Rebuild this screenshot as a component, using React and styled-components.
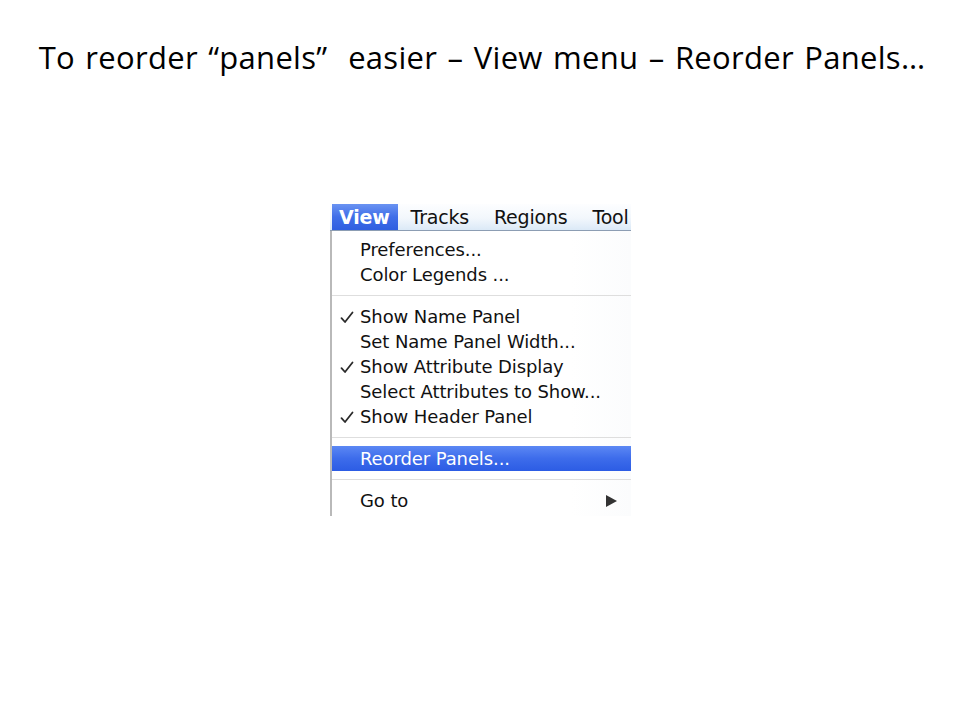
import styled, { createGlobalStyle } from 'styled-components';

const GlobalStyle = createGlobalStyle`
  html, body {
    margin: 0;
    padding: 0;
    background: #fff;
  }
`;

const menuBarItems = ['View', 'Tracks', 'Regions', 'Tool'];

const groups = [
  [
    { label: 'Preferences...' },
    { label: 'Color Legends ...' },
  ],
  [
    { label: 'Show Name Panel', checked: true },
    { label: 'Set Name Panel Width...' },
    { label: 'Show Attribute Display', checked: true },
    { label: 'Select Attributes to Show...' },
    { label: 'Show Header Panel', checked: true },
  ],
  [{ label: 'Reorder Panels...', active: true }],
  [{ label: 'Go to', submenu: true }],
];

const App = () => {
  return (
    <Page>
      <GlobalStyle />
      <Title>To reorder “panels”  easier – View menu – Reorder Panels…</Title>
      <Shot>
        <MenuBar>
          {menuBarItems.map((item, i) => (
            <BarItem key={item} $open={i === 0}>
              {item}
            </BarItem>
          ))}
        </MenuBar>
        <Dropdown>
          {groups.map((group, gi) => (
            <Group key={gi}>
              {gi > 0 && <Separator />}
              {group.map((item) => (
                <MenuItem key={item.label} $active={item.active}>
                  <Check>
                    {item.checked && (
                      <svg width="14" height="13" viewBox="0 0 14 13">
                        <path
                          d="M1.5 7.2 L5 11 L12.5 1.5"
                          fill="none"
                          stroke="#2a2a2a"
                          strokeWidth="1.8"
                          strokeLinecap="round"
                          strokeLinejoin="round"
                        />
                      </svg>
                    )}
                  </Check>
                  <Label>{item.label}</Label>
                  {item.submenu && (
                    <Arrow width="11" height="12" viewBox="0 0 11 12">
                      <polygon points="0,0 11,6 0,12" fill="#333" />
                    </Arrow>
                  )}
                </MenuItem>
              ))}
            </Group>
          ))}
        </Dropdown>
      </Shot>
    </Page>
  );
};

const Page = styled.div`
  width: 960px;
  height: 720px;
  padding-top: 37px;
  box-sizing: border-box;
  display: flex;
  flex-direction: column;
  align-items: center;
  background: #fff;
`;

const Title = styled.h1`
  margin: 0 0 0 4px;
  font-family: 'Open Sans', 'Liberation Sans', sans-serif;
  font-weight: 400;
  font-size: 31px;
  line-height: 40px;
  color: #000;
  white-space: pre;
  letter-spacing: 0.3px;
  word-spacing: 2px;
`;

const Shot = styled.div`
  margin-top: 127px;
  margin-left: 1px;
  width: 301px;
  height: 312px;
  overflow: hidden;
  display: flex;
  flex-direction: column;
  background: #fff;
  font-family: 'DejaVu Sans', 'Liberation Sans', sans-serif;
`;

const MenuBar = styled.div`
  height: 26px;
  flex-shrink: 0;
  display: flex;
  align-items: stretch;
  padding-left: 2px;
  background: linear-gradient(#fdfeff, #f2f7fc 55%, #dbe9f7);
  border-bottom: 1px solid #8c9db3;
  white-space: nowrap;
  overflow: hidden;
`;

const BarItem = styled.div`
  display: flex;
  align-items: center;
  flex-shrink: 0;
  padding: ${(p) => (p.$open ? '0 8px 0 7px' : '0 12px 0 13px')};
  font-size: 19px;
  letter-spacing: -0.2px;
  font-weight: ${(p) => (p.$open ? 700 : 400)};
  color: ${(p) => (p.$open ? '#fff' : '#111')};
  background: ${(p) =>
    p.$open ? 'linear-gradient(#6a93f2, #3f6ee8 50%, #2f5fe0)' : 'transparent'};
`;

const Dropdown = styled.div`
  flex: 1;
  display: flex;
  flex-direction: column;
  padding-top: 6px;
  border-left: 2px solid #b9b9b9;
  background: linear-gradient(90deg, #fff 80%, #fbfcfd);
`;

const Group = styled.div`
  display: flex;
  flex-direction: column;
`;

const Separator = styled.div`
  height: 17px;
  display: flex;
  align-items: center;
  &::after {
    content: '';
    flex: 1;
    height: 1px;
    background: #dedede;
  }
`;

const MenuItem = styled.div`
  height: 25px;
  display: flex;
  align-items: center;
  font-size: 18px;
  letter-spacing: -0.1px;
  color: ${(p) => (p.$active ? '#fff' : '#111')};
  background: ${(p) =>
    p.$active ? 'linear-gradient(#5c88f4, #3d6ceb 50%, #2c5ce4)' : 'transparent'};
`;

const Check = styled.span`
  width: 28px;
  height: 25px;
  padding: 2px 0 0 8px;
  box-sizing: border-box;
  display: flex;
  align-items: center;
  flex-shrink: 0;
`;

const Label = styled.span`
  flex: 1;
  white-space: nowrap;
`;

const Arrow = styled.svg`
  margin-right: 14px;
  flex-shrink: 0;
`;

export default App;
